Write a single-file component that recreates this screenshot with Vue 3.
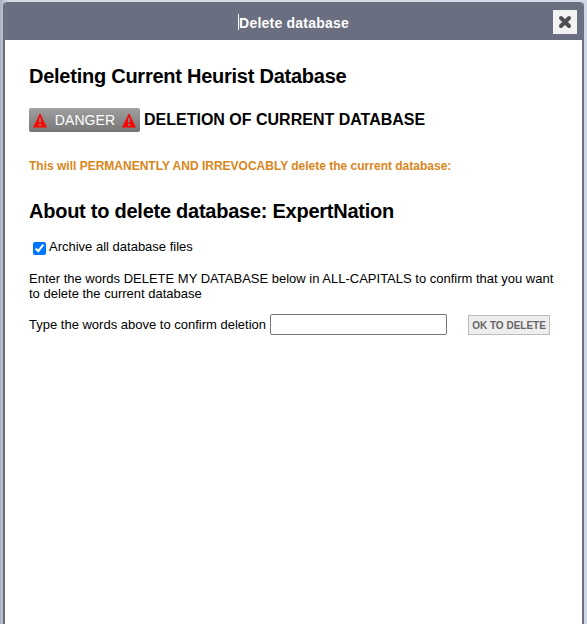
<script setup>
import { ref } from 'vue'

const archive = ref(true)
const confirmation = ref('')
</script>

<template>
  <div class="backdrop">
    <section class="dialog">
      <header class="titlebar">
        <span class="title">Delete database</span>
        <button class="close" aria-label="Close">
          <svg width="14" height="14" viewBox="0 0 14 14">
            <path d="M3 3L11 11M11 3L3 11" stroke="#4d4f52" stroke-width="4" stroke-linecap="round" />
          </svg>
        </button>
      </header>
      <main class="content">
        <h2 class="heading">Deleting Current Heurist Database</h2>
        <div class="danger-row">
          <span class="danger">
            <svg v-for="n in 2" :key="n" class="warn" :class="{ last: n === 2 }" width="14" height="15" viewBox="0 0 14 15">
              <path d="M7 0.3L14 14.5H0Z" fill="#fb0505" />
              <path d="M7 5V9.5M7 11V13" stroke="#858585" stroke-width="1.8" />
            </svg>
            <span class="danger-label">DANGER</span>
          </span>
          <span class="danger-title">DELETION OF CURRENT DATABASE</span>
        </div>
        <p class="warning">This will PERMANENTLY AND IRREVOCABLY delete the current database:</p>
        <h2 class="heading about">About to delete database: ExpertNation</h2>
        <label class="archive">
          <input v-model="archive" type="checkbox" class="check" />
          <span>Archive all database files</span>
        </label>
        <p class="instructions">
          <span class="line">Enter the words DELETE MY DATABASE below in ALL-CAPITALS to confirm that you want</span>
          <span class="line">to delete the current database</span>
        </p>
        <div class="confirm">
          <label for="words">Type the words above to confirm deletion</label>
          <input id="words" v-model="confirmation" type="text" class="words" />
          <button class="ok">OK TO DELETE</button>
        </div>
      </main>
    </section>
  </div>
</template>

<style>
body {
  overflow: hidden;
}
</style>

<style scoped>
.backdrop {
  box-sizing: border-box;
  height: 624px;
  padding: 2px 3px 0;
  overflow: hidden;
  background: linear-gradient(90deg, #a9b2be 0, #bac3d0 3px, #d4d9e3 8px, #d4d9e5 580px, #ced6e6 587px);
  font-family: "Liberation Sans", Arial, sans-serif;
  font-size: 12px;
  color: #000;
}
.dialog {
  box-sizing: border-box;
  height: 640px;
  border: 2px solid #696e80;
  border-top: 0;
  border-radius: 4px 4px 0 0;
  background: #fff;
  overflow: hidden;
}
.titlebar {
  display: flex;
  align-items: center;
  justify-content: flex-end;
  height: 38px;
  padding-right: 5px;
  background: #696e80;
}
.title {
  height: 16px;
  line-height: 18px;
  margin: 2px 204px 0 0;
  border-left: 1px solid #fff;
  color: #fff;
  font-size: 14px;
  font-weight: bold;
  letter-spacing: 0.22px;
  white-space: nowrap;
}
.close {
  display: flex;
  align-items: center;
  justify-content: center;
  width: 24px;
  height: 24px;
  margin-top: 2px;
  padding: 0;
  border: 0;
  background: #f2f2f2;
}
.content {
  padding: 24px 24px 0;
}
.heading {
  margin: 0;
  height: 24px;
  line-height: 24px;
  font-size: 20px;
  letter-spacing: -0.25px;
  white-space: nowrap;
}
.danger-row {
  display: flex;
  align-items: center;
  gap: 4px;
  height: 24px;
  margin-top: 20px;
}
.danger {
  box-sizing: border-box;
  display: flex;
  align-items: center;
  justify-content: space-between;
  width: 111px;
  height: 24px;
  padding: 2px 4px 0;
  border-radius: 2px;
  border-bottom: 1px solid #707070;
  background: linear-gradient(#a0a0a0, #787878);
}
.warn.last {
  order: 3;
}
.danger-label {
  order: 2;
  margin: 0 0 2px 1px;
  color: #fff;
  font-size: 14px;
  letter-spacing: 0.1px;
}
.danger-title {
  font-size: 16px;
  font-weight: bold;
  line-height: 22px;
  white-space: nowrap;
}
.warning {
  margin: 26px 0 0;
  height: 16px;
  line-height: 16px;
  color: #d9861b;
  font-weight: bold;
  white-space: nowrap;
}
.about {
  margin-top: 25px;
}
.archive {
  display: flex;
  align-items: flex-start;
  height: 16px;
  margin-top: 16px;
  line-height: 15px;
  font-size: 13px;
}
.check {
  width: 13px;
  height: 13px;
  margin: 3px 3px 0 4px;
  accent-color: #0075ff;
}
.instructions {
  margin: 16px 0 0;
}
.line {
  display: block;
  height: 15px;
  line-height: 15px;
  font-size: 13px;
  white-space: nowrap;
}
.confirm {
  display: flex;
  align-items: center;
  height: 21px;
  margin-top: 13px;
  font-size: 13px;
  white-space: nowrap;
}
.confirm label {
  width: 241px;
}
.words {
  box-sizing: border-box;
  width: 177px;
  height: 21px;
  padding: 1px 2px;
  border: 1px solid #767676;
  border-radius: 2px;
}
.ok {
  box-sizing: border-box;
  width: 82px;
  height: 20px;
  margin: 1px 0 0 21px;
  padding: 0;
  border: 1px solid #bbb;
  background: #eee;
  color: #666;
  font-family: inherit;
  font-size: 10px;
  font-weight: bold;
}
</style>
